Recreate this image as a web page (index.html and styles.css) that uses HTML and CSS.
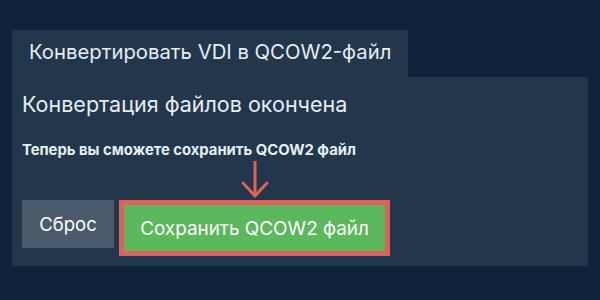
FILE: index.html
```html
<!DOCTYPE html>
<html lang="ru">
<head>
<meta charset="utf-8">
<link rel="stylesheet" href="styles.css">
</head>
<body>
<div class="wrap">
  <div class="tab">Конвертировать VDI в QCOW2-файл</div>
  <div class="panel">
    <h2 class="title">Конвертация файлов окончена</h2>
    <p class="note">Теперь вы сможете сохранить QCOW2 файл</p>
    <div class="actions">
      <button class="btn reset">Сброс</button>
      <div class="save-wrap">
        <svg class="arrow" width="30" height="38" viewBox="0 0 30 38">
          <path d="M15 1 V35 M3 22 L15 35 L27 22" fill="none" stroke="#e0605a" stroke-width="3" stroke-linecap="round" stroke-linejoin="round"/>
        </svg>
        <button class="btn save">Сохранить QCOW2 файл</button>
      </div>
    </div>
  </div>
</div>
</body>
</html>
```
FILE: styles.css
```css
html, body {
  margin: 0;
  padding: 0;
  background: #10233a;
  font-family: Inter, "Noto Sans", sans-serif;
  color: #e8edf2;
}
.wrap {
  padding: 30px 12px 0 12px;
}
.tab {
  display: inline-block;
  background: #22364c;
  height: 47px;
  line-height: 44px;
  padding: 0 17px;
  font-size: 20.3px;
  color: #e8edf2;
  box-sizing: border-box;
}
.panel {
  background: #22364c;
  height: 189px;
  box-sizing: border-box;
  padding: 12px 10px 0 10px;
}
.title {
  margin: 0;
  font-size: 21.5px;
  font-weight: 400;
  line-height: 30px;
}
.note {
  margin: 21px 0 0 0;
  font-size: 14.8px;
  font-weight: 700;
  line-height: 20px;
}
.actions {
  display: flex;
  align-items: flex-start;
  gap: 5px;
  margin-top: 40px;
}
.btn {
  border: 0;
  font-family: inherit;
  font-size: 18.9px;
  color: #fff;
  margin: 0;
  cursor: pointer;
}
.reset {
  background: #4b5b6b;
  width: 92px;
  height: 48px;
  font-size: 18.5px;
}
.save-wrap {
  position: relative;
}
.arrow {
  position: absolute;
  left: 121px;
  top: -39px;
}
.save {
  background: #5cb85c;
  border: 5px solid #df5f5c;
  width: 271px;
  height: 56px;
  box-sizing: border-box;
}
```
